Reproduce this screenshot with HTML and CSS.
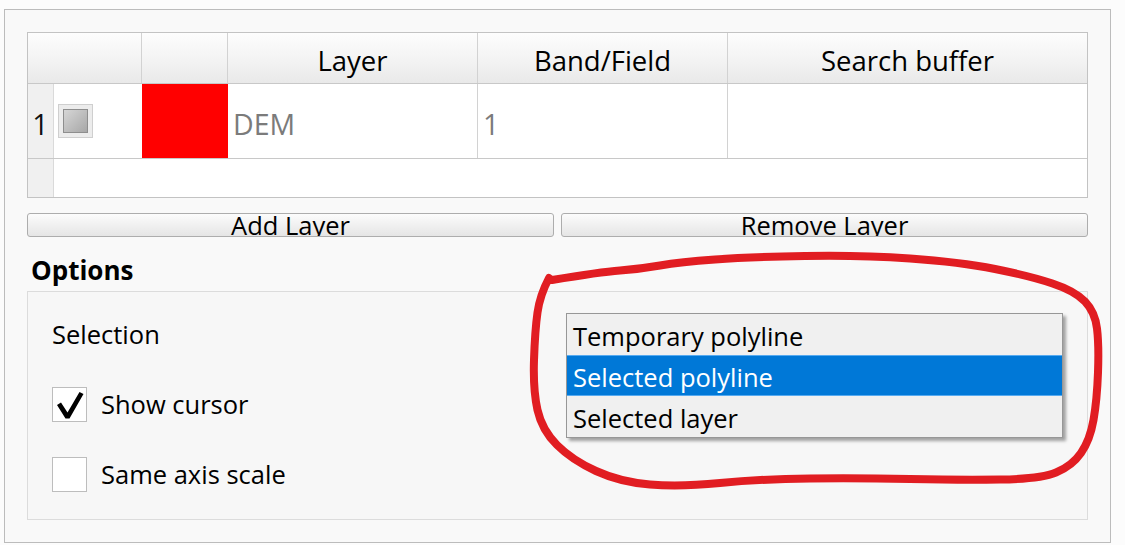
FILE: index.html
```html
<!DOCTYPE html>
<html lang="en">
<head>
<meta charset="utf-8">
<title>Profile options</title>
<link rel="stylesheet" href="styles.css">
</head>
<body>
<div class="frame">
  <div class="table">
    <div class="thead">
      <div class="th"></div>
      <div class="th"></div>
      <div class="th">Layer</div>
      <div class="th">Band/Field</div>
      <div class="th th-last">Search buffer</div>
    </div>
    <div class="trow">
      <div class="rowhdr">1</div>
      <div class="td-check"><span class="tcheck"><span class="tcheck-inner"></span></span></div>
      <div class="td-color"></div>
      <div class="td-text">DEM</div>
      <div class="td-text">1</div>
      <div class="td-last"></div>
    </div>
    <div class="tempty"><div class="rowhdr-strip"></div></div>
  </div>

  <div class="buttons">
    <div class="btn">Add Layer</div>
    <div class="btn">Remove Layer</div>
  </div>

  <div class="options-title">Options</div>
  <div class="group">
    <div class="selection">Selection</div>
    <div class="check-row">
      <span class="cbox">
        <svg width="33" height="33" viewBox="0 0 33 33"><path d="M4 17 L8 14.5 L14.5 24.5 L26.5 4 L30.5 6 L16.5 30.5 L12.5 30.5 Z" fill="#000"/></svg>
      </span>
      <span>Show cursor</span>
    </div>
    <div class="check-row">
      <span class="cbox"></span>
      <span>Same axis scale</span>
    </div>

    <div class="popup">
      <div class="item">Temporary polyline</div>
      <div class="item item-sel">Selected polyline</div>
      <div class="item">Selected layer</div>
    </div>
  </div>
</div>

<svg class="annot" width="1125" height="545" viewBox="0 0 1125 545">
  <path d="M552 280 Q600 272 620 270.5 Q640 269 660 265.5 Q680 262 715 259.5 Q750 257 805 256 Q860 255 910 258.5 Q960 262 995 269 Q1030 276 1052.5 283.5 Q1075 291 1085 301.5 Q1095 312 1097 328.5 Q1099 345 1098 372.5 Q1097 400 1093.5 420 Q1090 440 1081 453 Q1072 466 1056 472.5 Q1040 479 1000 479.5 Q960 480 910 479 Q860 478 810 478.5 Q760 479 720 483 Q680 487 650 484.5 Q620 482 596 471 Q572 460 557 445 Q542 430 537.5 410 Q533 390 534 360 Q535 330 537.5 312.5 Q540 295 549 278" fill="none" stroke="#e11d22" stroke-width="8" stroke-linecap="round" stroke-linejoin="round"/>
</svg>
</body>
</html>
```
FILE: styles.css
```css
html { background: #fcfcfc; }
body {
  margin: 0;
  font-family: "Open Sans", "Noto Sans", sans-serif;
  font-size: 25.5px;
  color: #000;
}

.frame {
  margin: 9px 0 0 4px;
  width: 1107px;
  height: 534px;
  box-sizing: border-box;
  border: 1px solid #bcbcbc;
  background: #f9f9f9;
  padding: 22px 22px 0 22px;
}

/* table */
.table {
  border: 1px solid #c3c3c3;
  background: #fff;
}
.thead {
  display: grid;
  grid-template-columns: 114px 86px 250px 250px 1fr;
  height: 50px;
  border-bottom: 1px solid #c8c8c8;
  background: linear-gradient(#fdfdfd, #f3f3f3 55%, #e9e9e9);
}
.th {
  border-right: 1px solid #d2d2d2;
  font-size: 27.5px;
  line-height: 37px;
  padding-top: 9px;
  text-align: center;
}
.th-last { border-right: none; }

.trow {
  display: grid;
  grid-template-columns: 26px 88px 86px 250px 250px 1fr;
  height: 74px;
  border-bottom: 1px solid #c8c8c8;
}
.rowhdr {
  background: #f0f0f0;
  border-right: 1px solid #dadada;
  font-size: 28.5px;
  line-height: 39px;
  padding-top: 21px;
  text-align: center;
  color: #111;
}
.td-check { padding: 20px 0 0 4px; }
.tcheck {
  width: 35px;
  height: 34px;
  box-sizing: border-box;
  border: 1px solid #cfcfcf;
  background: #ececec;
  display: flex;
  align-items: center;
  justify-content: center;
}
.tcheck-inner {
  width: 25px;
  height: 24px;
  box-sizing: border-box;
  border: 1px solid #8e8e8e;
  background: linear-gradient(135deg, #d6d6d6, #a7a7a7);
}
.td-color { background: #ff0000; }
.td-text {
  color: #7b7b7b;
  font-size: 28.5px;
  line-height: 39px;
  padding: 21px 0 0 5px;
  border-right: 1px solid #d2d2d2;
}
.tempty {
  height: 38px;
  display: flex;
}
.rowhdr-strip {
  width: 26px;
  box-sizing: border-box;
  border-right: 1px solid #dadada;
  background: #f0f0f0;
}

/* buttons */
.buttons {
  display: flex;
  gap: 7px;
  margin-top: 15px;
}
.btn {
  flex: 1;
  height: 24px;
  box-sizing: border-box;
  border: 1px solid #adadad;
  border-radius: 3px;
  background: linear-gradient(#fcfcfc, #e5e5e5);
  line-height: 24px;
  text-align: center;
  overflow: hidden;
}
.btn::before { content: ""; display: block; margin-top: -1px; }

/* options */
.options-title {
  font-weight: 700;
  font-size: 26px;
  line-height: 30px;
  margin-top: 18px;
  padding-left: 4px;
}
.group {
  position: relative;
  margin-top: 6px;
  height: 229px;
  box-sizing: border-box;
  border: 1px solid #dcdcdc;
  background: #f7f7f7;
  padding: 25px 24px 0 24px;
  display: flex;
  flex-direction: column;
  gap: 35px;
}
.selection { line-height: 35px; }
.check-row {
  display: flex;
  align-items: center;
  gap: 14px;
  height: 35px;
  line-height: 35px;
}
.cbox {
  width: 35px;
  height: 35px;
  box-sizing: border-box;
  border: 1px solid #bdbdbd;
  background: #fff;
  display: flex;
}
.cbox svg { display: block; }

/* dropdown popup */
.popup {
  position: absolute;
  left: 538px;
  top: 21px;
  width: 497px;
  height: 125px;
  box-sizing: border-box;
  border: 1px solid #979797;
  background: #f0f0f0;
  box-shadow: 3px 3px 3px rgba(0, 0, 0, 0.35);
}
.item {
  height: 41px;
  line-height: 44px;
  padding-left: 6px;
  white-space: nowrap;
}
.item-sel {
  background: #0078d7;
  color: #fff;
  box-shadow: inset 0 1px 0 #56aaf0, inset 0 -1px 0 #56aaf0;
}

/* red hand-drawn annotation over the page */
.annot {
  position: absolute;
  left: 0;
  top: 0;
  pointer-events: none;
}
```
